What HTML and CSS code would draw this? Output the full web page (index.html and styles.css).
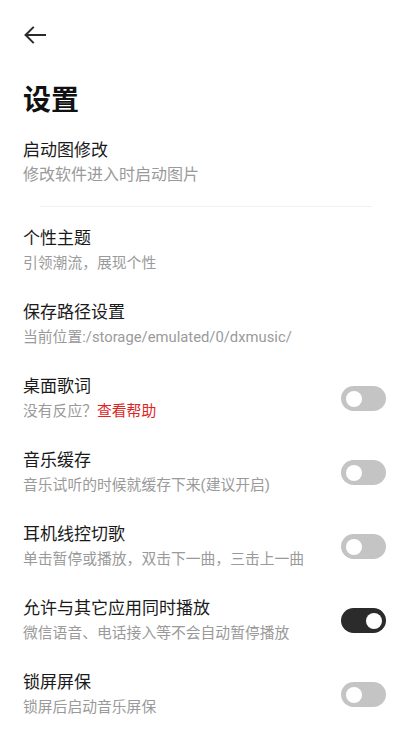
FILE: index.html
```html
<!DOCTYPE html>
<html lang="zh-CN">
<head>
<meta charset="utf-8">
<link rel="stylesheet" href="styles.css">
</head>
<body>
<div class="page">
  <header class="appbar">
    <svg class="back" width="24" height="24" viewBox="0 0 24 24">
      <path d="M22 12H2.8M10 4.6L2.6 12l7.4 7.4" fill="none" stroke="#2a2a2a" stroke-width="2" stroke-linecap="square"/>
    </svg>
  </header>
  <h1 class="title">设置</h1>
  <div class="item">
    <div class="text">
      <div class="name">启动图修改</div>
      <div class="desc big">修改软件进入时启动图片</div>
    </div>
  </div>
  <div class="divider"></div>
  <div class="item">
    <div class="text">
      <div class="name">个性主题</div>
      <div class="desc">引领潮流，展现个性</div>
    </div>
  </div>
  <div class="item">
    <div class="text">
      <div class="name">保存路径设置</div>
      <div class="desc">当前位置:/storage/emulated/0/dxmusic/</div>
    </div>
  </div>
  <div class="item">
    <div class="text">
      <div class="name">桌面歌词</div>
      <div class="desc">没有反应？<span class="link">查看帮助</span></div>
    </div>
    <span class="switch"><span class="knob"></span></span>
  </div>
  <div class="item">
    <div class="text">
      <div class="name">音乐缓存</div>
      <div class="desc">音乐试听的时候就缓存下来(建议开启)</div>
    </div>
    <span class="switch"><span class="knob"></span></span>
  </div>
  <div class="item">
    <div class="text">
      <div class="name">耳机线控切歌</div>
      <div class="desc">单击暂停或播放，双击下一曲，三击上一曲</div>
    </div>
    <span class="switch"><span class="knob"></span></span>
  </div>
  <div class="item">
    <div class="text">
      <div class="name">允许与其它应用同时播放</div>
      <div class="desc">微信语音、电话接入等不会自动暂停播放</div>
    </div>
    <span class="switch on"><span class="knob"></span></span>
  </div>
  <div class="item">
    <div class="text">
      <div class="name">锁屏屏保</div>
      <div class="desc">锁屏后启动音乐屏保</div>
    </div>
    <span class="switch"><span class="knob"></span></span>
  </div>
</div>
</body>
</html>
```
FILE: styles.css
```css
html, body {
  margin: 0;
  padding: 0;
  background: #ffffff;
}
body {
  font-family: Roboto, "Noto Sans CJK SC", sans-serif;
  color: #1c1c1c;
  width: 412px;
  height: 732px;
  overflow: hidden;
}
.page {
  display: flex;
  flex-direction: column;
}
.appbar {
  height: 70px;
  display: flex;
  align-items: center;
  padding-left: 23px;
}
.back {
  display: block;
}
.title {
  margin: 12.5px 0 7px 0;
  padding: 0 23px;
  font-size: 28px;
  line-height: 36px;
  font-weight: 700;
  color: #111;
}
.item {
  display: flex;
  align-items: center;
  padding: 12.5px 26px 12.5px 23px;
}
.text {
  flex: 1;
  min-width: 0;
}
.name {
  font-size: 17px;
  line-height: 25px;
  color: #1a1a1a;
}
.desc {
  font-size: 14.8px;
  line-height: 24px;
  color: #9a9a9a;
}
.desc.big {
  font-size: 16px;
}
.link {
  color: #e02424;
}
.divider {
  height: 1px;
  background: #f0f0f0;
  margin: 6px 40px 7px 40px;
}
.switch {
  width: 45px;
  height: 25px;
  border-radius: 13px;
  background: #c4c4c4;
  display: flex;
  align-items: center;
  padding: 0 5px;
  box-sizing: border-box;
  flex-shrink: 0;
}
.switch.on {
  background: #2b2b2b;
  justify-content: flex-end;
  padding: 0 4px;
}
.knob {
  width: 16px;
  height: 16px;
  border-radius: 50%;
  background: #ffffff;
}
```
